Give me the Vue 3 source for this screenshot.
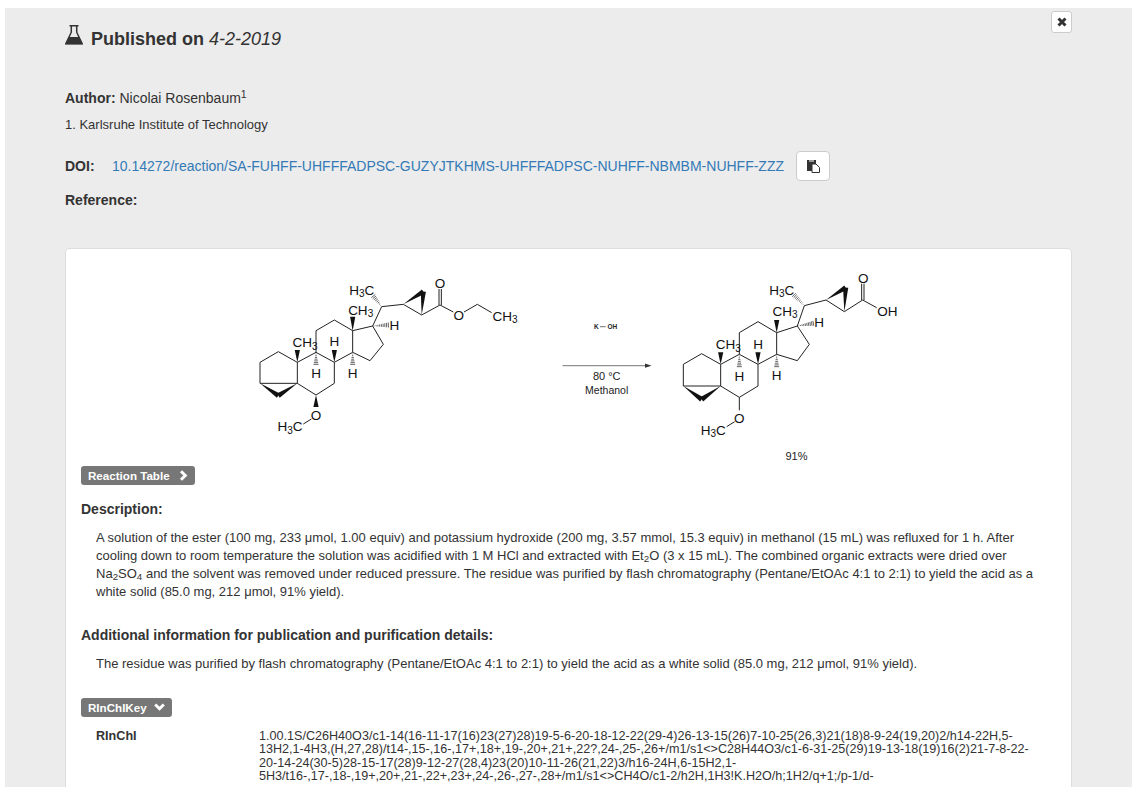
<template>
  <div class="page">
    <div class="panel">
      <div class="head">
        <h2 class="title">
          <svg class="flask" width="18" height="20" viewBox="0 0 18 20">
            <path d="M4.5 .8H13.5M6.3 1V7.2L1 18.5H17L11.7 7.2V1" fill="none" stroke="#333" stroke-width="1.5" />
            <path d="M3.8 12H14.2L18 19.6H0Z" fill="#333" />
          </svg>
          <span>Published on <em>4-2-2019</em></span>
        </h2>
        <button class="close">
          <svg width="10" height="10" viewBox="0 0 10 10">
            <path d="M1.5 1.5L8.5 8.5M8.5 1.5L1.5 8.5" stroke="#333" stroke-width="3" />
          </svg>
        </button>
      </div>

      <p class="author"><b>Author:</b> Nicolai Rosenbaum<sup>1</sup></p>
      <p class="affil">1. Karlsruhe Institute of Technology</p>

      <div class="doi">
        <b class="doi-label">DOI:</b>
        <a href="#">10.14272/reaction/SA-FUHFF-UHFFFADPSC-GUZYJTKHMS-UHFFFADPSC-NUHFF-NBMBM-NUHFF-ZZZ</a>
        <button class="copy">
          <svg width="13" height="13" viewBox="0 0 13 13">
            <rect x="0" y="0" width="9" height="11" fill="#333" />
            <rect x="2" y="0" width="5" height="2" fill="#999" />
            <path d="M5 4H9L12.5 7.5V12.5H5Z" fill="#fff" stroke="#333" />
          </svg>
        </button>
      </div>
      <p class="reference"><b>Reference:</b></p>

      <div class="card">
        <!-- scheme uses page coordinates, the viewBox starts at the card's corner -->
        <svg class="scheme" width="1005" height="215" viewBox="66 249 1005 215">
          <g v-for="(mol, i) in molecules" :key="i">
            <line v-for="(l, j) in mol.lines" :key="j" :x1="l[0]" :y1="l[1]" :x2="l[2]" :y2="l[3]" class="bond" />
            <polygon v-for="(w, j) in mol.wedges" :key="j" :points="w" fill="#111" />
            <line v-for="(l, j) in mol.hashes" :key="j" :x1="l[0]" :y1="l[1]" :x2="l[2]" :y2="l[3]" class="hash" />
            <text v-for="(a, j) in mol.labels" :key="j" :x="a.x" :y="a.y" class="atom" text-anchor="middle">
              <tspan v-for="(p, k) in a.parts" :key="k" :dy="p.dy" :font-size="p.sub ? 10 : 13.5">{{ p.text }}</tspan>
            </text>
          </g>

          <text x="596.3" y="329" class="koh" text-anchor="middle">K</text>
          <line x1="600" y1="326.7" x2="605.7" y2="326.7" stroke="#333" stroke-width=".7" />
          <text x="612.3" y="329" class="koh" text-anchor="middle">OH</text>

          <line x1="562.5" y1="365.7" x2="647" y2="365.7" stroke="#777" stroke-width="1" />
          <polygon points="645,363.6 651.5,365.7 645,367.8" fill="#333" />
          <text x="606.7" y="380" class="cond" text-anchor="middle">80 °C</text>
          <text x="606.7" y="394" class="cond-small" text-anchor="middle">Methanol</text>
          <text x="796.5" y="460" class="yield" text-anchor="middle">91%</text>
        </svg>

        <div class="inner">
          <span class="toggle toggle-table">
            Reaction Table
            <svg width="9" height="11" viewBox="0 0 9 11">
              <path d="M2 1.2L6.3 5.5L2 9.8" fill="none" stroke="#fff" stroke-width="3" />
            </svg>
          </span>

          <h4 class="desc-head">Description:</h4>
          <p class="text">
            A solution of the ester (100 mg, 233 μmol, 1.00 equiv) and potassium hydroxide (200 mg, 3.57 mmol, 15.3 equiv) in methanol (15 mL) was refluxed for 1 h. After cooling down to room temperature the solution was acidified with 1 M HCl and extracted with Et<sub>2</sub>O (3 x 15 mL). The combined organic extracts were dried over Na<sub>2</sub>SO<sub>4</sub> and the solvent was removed under reduced pressure. The residue was purified by flash chromatography (Pentane/EtOAc 4:1 to 2:1) to yield the acid as a white solid (85.0 mg, 212 μmol, 91% yield).
          </p>

          <h4 class="info-head">Additional information for publication and purification details:</h4>
          <p class="text">
            The residue was purified by flash chromatography (Pentane/EtOAc 4:1 to 2:1) to yield the acid as a white solid (85.0 mg, 212 μmol, 91% yield).
          </p>

          <span class="toggle toggle-key">
            RInChIKey
            <svg width="11" height="8" viewBox="0 0 11 8">
              <path d="M1.2 1.5L5.5 5.7L9.8 1.5" fill="none" stroke="#fff" stroke-width="3" />
            </svg>
          </span>

          <div class="rinchi">
            <b class="rinchi-label">RInChI</b>
            <div class="rinchi-value">
              <div v-for="line in rinchiLines" :key="line">{{ line }}</div>
            </div>
          </div>
        </div>
      </div>
    </div>
  </div>
</template>

<script setup>
const rinchiLines = [
  '1.00.1S/C26H40O3/c1-14(16-11-17(16)23(27)28)19-5-6-20-18-12-22(29-4)26-13-15(26)7-10-25(26,3)21(18)8-9-24(19,20)2/h14-22H,5-',
  '13H2,1-4H3,(H,27,28)/t14-,15-,16-,17+,18+,19-,20+,21+,22?,24-,25-,26+/m1/s1<>C28H44O3/c1-6-31-25(29)19-13-18(19)16(2)21-7-8-22-',
  '20-14-24(30-5)28-15-17(28)9-12-27(28,4)23(20)10-11-26(21,22)3/h16-24H,6-15H2,1-',
  '5H3/t16-,17-,18-,19+,20+,21-,22+,23+,24-,26-,27-,28+/m1/s1<>CH4O/c1-2/h2H,1H3!K.H2O/h;1H2/q+1;/p-1/d-',
]

// coordinates were read from a 3x crop, so everything gets divided by 3 here
const buildMolecule = (ox, raw) => {
  const X = (v) => ox + v / 3
  const Y = (v) => 265 + v / 3

  const lines = raw.lines.map((l) => [X(l[0]), Y(l[1]), X(l[2]), Y(l[3])])

  const wedges = raw.wedges.map((w) => {
    const [x1, y1, x2, y2] = [X(w[0]), Y(w[1]), X(w[2]), Y(w[3])]
    const len = Math.hypot(x2 - x1, y2 - y1)
    const nx = (-(y2 - y1) / len) * 2.6
    const ny = ((x2 - x1) / len) * 2.6
    return `${x1},${y1} ${x2 + nx},${y2 + ny} ${x2 - nx},${y2 - ny}`
  })

  const hashes = []
  raw.hashes.forEach((h) => {
    const [x1, y1, x2, y2] = [X(h[0]), Y(h[1]), X(h[2]), Y(h[3])]
    const len = Math.hypot(x2 - x1, y2 - y1)
    const ux = (x2 - x1) / len
    const uy = (y2 - y1) / len
    const steps = Math.round(len / 1.7)
    for (let i = 1; i <= steps; i++) {
      const t = i / steps
      const cx = x1 + (x2 - x1) * t
      const cy = y1 + (y2 - y1) * t
      const half = 2.5 * t
      hashes.push([cx - uy * half, cy + ux * half, cx + uy * half, cy - ux * half])
    }
  })

  const labels = raw.labels.map(([x, y, text]) => {
    let wasSub = false
    const parts = text.match(/\d+|\D+/g).map((chunk) => {
      const sub = /\d/.test(chunk)
      const dy = sub ? 2.5 : wasSub ? -2.5 : 0
      wasSub = sub
      return { text: chunk, sub, dy }
    })
    return { x: X(x), y: Y(y) + 4.8, parts }
  })

  return { lines, wedges, hashes, labels }
}

const ester = {
  lines: [
    [60, 292, 115, 260], [115, 260, 172, 292], [172, 292, 172, 355], [60, 292, 60, 355], [60, 355, 172, 355],
    [172, 292, 228, 262], [228, 262, 283, 292], [283, 292, 283, 355], [283, 355, 228, 390], [228, 390, 172, 355],
    [228, 262, 228, 197], [228, 197, 283, 165], [283, 165, 338, 197], [338, 197, 338, 262], [338, 262, 283, 292],
    [338, 197, 398, 183], [398, 183, 430, 238], [430, 238, 390, 287], [390, 287, 338, 262],
    [398, 183, 425, 125], [425, 125, 490, 118], [490, 118, 545, 150], [545, 150, 600, 120],
    [597, 120, 597, 72], [604, 120, 604, 72], [600, 120, 640, 141], [672, 141, 712, 118], [712, 118, 755, 143],
    [214, 462, 190, 477],
  ],
  wedges: [
    [60, 355, 115, 392], [172, 355, 115, 392], [490, 118, 550, 80], [545, 150, 550, 80],
    [228, 390, 228, 426], [172, 292, 172, 255], [338, 197, 338, 155], [283, 292, 283, 255],
  ],
  hashes: [
    [425, 125, 400, 93], [398, 183, 445, 180], [228, 262, 228, 298], [338, 262, 338, 298],
  ],
  labels: [
    [365, 75, 'H3C'], [362, 135, 'CH3'], [463, 182, 'H'], [195, 232, 'CH3'], [283, 230, 'H'],
    [228, 326, 'H'], [338, 326, 'H'], [600, 55, 'O'], [656, 150, 'O'], [795, 153, 'CH3'],
    [228, 452, 'O'], [150, 485, 'H3C'],
  ],
}

const acid = {
  lines: [
    [40, 298, 95, 266], [95, 266, 152, 298], [152, 298, 152, 363], [40, 298, 40, 363], [40, 363, 152, 363],
    [152, 298, 208, 268], [208, 268, 264, 298], [264, 298, 264, 363], [264, 363, 208, 397], [208, 397, 152, 363],
    [208, 268, 208, 203], [208, 203, 264, 170], [264, 170, 320, 203], [320, 203, 320, 268], [320, 268, 264, 298],
    [320, 203, 382, 183], [382, 183, 418, 238], [418, 238, 382, 287], [382, 287, 320, 268],
    [382, 183, 403, 122], [403, 122, 468, 105], [468, 105, 523, 140], [523, 140, 578, 105],
    [575, 105, 575, 56], [582, 105, 582, 56], [578, 105, 620, 128],
    [208, 397, 208, 436], [194, 470, 170, 485],
  ],
  wedges: [
    [40, 363, 95, 403], [152, 363, 95, 403], [468, 105, 527, 68], [523, 140, 527, 68],
    [152, 298, 152, 262], [320, 203, 320, 165], [264, 298, 264, 262],
  ],
  hashes: [
    [403, 122, 372, 90], [382, 183, 430, 175], [208, 268, 208, 305], [320, 268, 320, 305],
  ],
  labels: [
    [335, 75, 'H3C'], [345, 138, 'CH3'], [447, 173, 'H'], [175, 238, 'CH3'], [264, 237, 'H'],
    [208, 333, 'H'], [320, 332, 'H'], [580, 40, 'O'], [652, 140, 'OH'], [208, 460, 'O'], [130, 495, 'H3C'],
  ],
}

const molecules = [buildMolecule(240, ester), buildMolecule(670, acid)]
</script>

<style scoped>
.page {
  height: 794px;
  box-sizing: border-box;
  padding: 8px 6px 0 5px;
  overflow: hidden;
  font-family: "Liberation Sans", Arial, sans-serif;
  font-size: 14px;
  color: #333;
}

.panel {
  height: 779px;
  box-sizing: border-box;
  padding: 3px 60px 0;
  background: #ececec;
  overflow: hidden;
}

.head {
  display: flex;
  justify-content: space-between;
  align-items: flex-start;
}

.title {
  display: flex;
  align-items: flex-start;
  margin: 18px 0 0;
  font-size: 18px;
  line-height: 20px;
  font-weight: bold;
}

.flask {
  margin: -4px 8px 0 0;
}

.title em {
  font-weight: normal;
}

.close {
  width: 21px;
  height: 22px;
  padding: 0;
  background: #fff;
  border: 1px solid #ccc;
  border-radius: 3px;
  display: flex;
  align-items: center;
  justify-content: center;
}

p {
  margin: 0;
}

.author {
  margin-top: 39px;
  line-height: 20px;
}

sup,
sub {
  position: relative;
  font-size: 75%;
  line-height: 0;
  vertical-align: baseline;
}

sup {
  top: -.5em;
}

sub {
  bottom: -.25em;
}

.affil {
  margin-top: 8px;
  font-size: 13px;
  line-height: 18px;
}

.doi {
  display: flex;
  align-items: center;
  margin-top: 17px;
}

.doi-label {
  width: 47px;
}

.doi a {
  color: #337ab7;
  text-decoration: none;
}

.copy {
  width: 34px;
  height: 30px;
  margin-left: 12px;
  padding: 0;
  background: #fff;
  border: 1px solid #ccc;
  border-radius: 4px;
  display: flex;
  align-items: center;
  justify-content: center;
}

.reference {
  margin-top: 9px;
  line-height: 20px;
}

.card {
  margin-top: 38px;
  background: #fff;
  border: 1px solid #ddd;
  border-radius: 4px;
}

.scheme {
  display: block;
}

.bond {
  stroke: #222;
  stroke-width: 1;
}

.hash {
  stroke: #222;
  stroke-width: .7;
}

.atom {
  fill: #111;
}

.koh {
  font-size: 6.5px;
  font-weight: bold;
  fill: #222;
}

.cond {
  font-size: 11px;
  fill: #222;
}

.cond-small {
  font-size: 10.5px;
  fill: #222;
}

.yield {
  font-size: 11px;
  fill: #222;
}

.inner {
  padding: 2px 15px 60px;
}

.toggle {
  display: flex;
  align-items: center;
  height: 19px;
  box-sizing: border-box;
  padding: 0 7px 1px;
  background: #777;
  border-radius: 3px;
  color: #fff;
  font-size: 11.6px;
  font-weight: bold;
}

.toggle-table {
  width: 114px;
  gap: 9px;
}

.toggle-key {
  width: 91px;
  gap: 7px;
  margin-top: 25px;
}

h4 {
  margin: 0;
  font-size: 14px;
  line-height: 20px;
  font-weight: bold;
}

.desc-head {
  margin-top: 14px;
}

.info-head {
  margin-top: 24px;
}

.text {
  margin-top: 10px;
  padding: 0 15px;
  font-size: 13px;
  line-height: 18px;
}

.rinchi {
  display: flex;
  margin-top: 13px;
  padding-left: 15px;
  font-size: 12.6px;
  line-height: 13.3px;
}

.rinchi-label {
  width: 163px;
  flex: none;
}

.rinchi-value {
  flex: 1;
  white-space: nowrap;
}
</style>
